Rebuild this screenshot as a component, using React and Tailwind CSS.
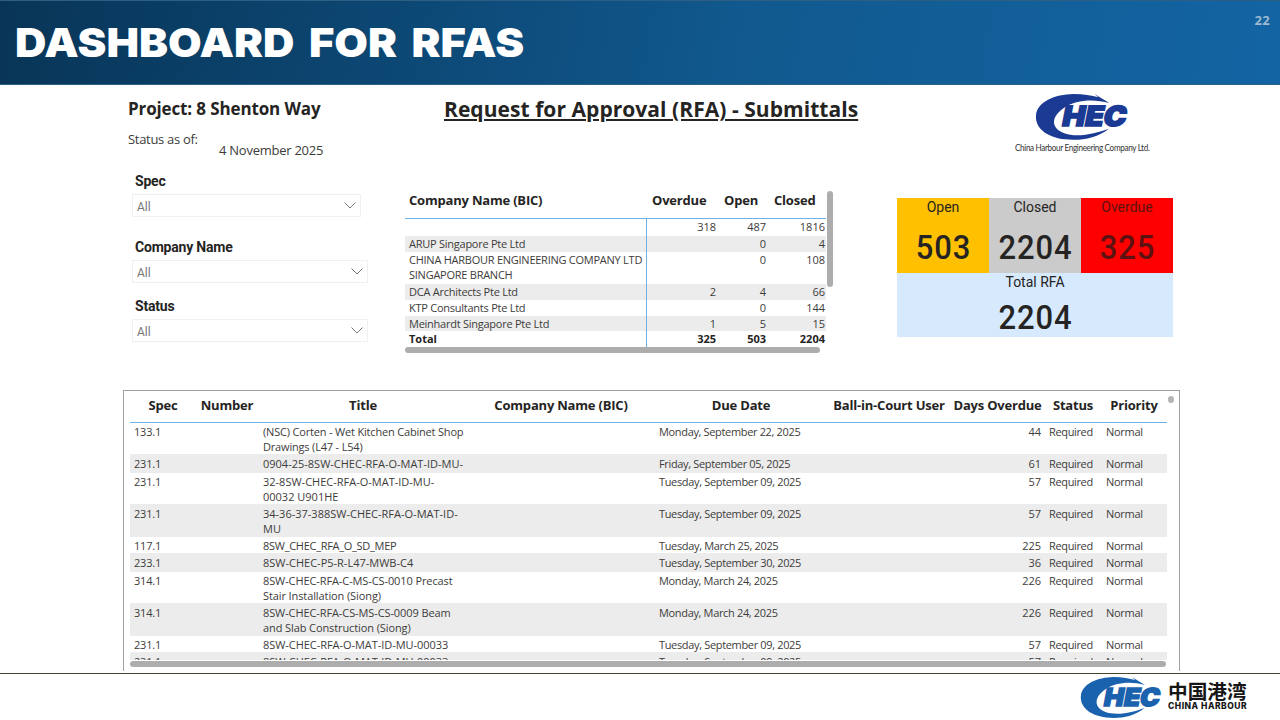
import React from 'react';

const filters = [
  { label: 'Spec', box: 'ml-1 w-[229px]', gap: 'h-[66px]' },
  { label: 'Company Name', box: 'ml-1 w-[236px]', gap: 'h-[59px]' },
  { label: 'Status', box: 'ml-1 w-[236px]', gap: 'h-[59px]' },
];

const companies = [
  { name: [''], overdue: '318', open: '487', closed: '1816', height: 'h-[17px]' },
  { name: ['ARUP Singapore Pte Ltd'], overdue: '', open: '0', closed: '4', height: 'h-[16px]' },
  { name: ['CHINA HARBOUR ENGINEERING COMPANY LTD', 'SINGAPORE BRANCH'], overdue: '', open: '0', closed: '108', height: 'h-[32px]' },
  { name: ['DCA Architects Pte Ltd'], overdue: '2', open: '4', closed: '66', height: 'h-[16px]' },
  { name: ['KTP Consultants Pte Ltd'], overdue: '', open: '0', closed: '144', height: 'h-[16px]' },
  { name: ['Meinhardt Singapore Pte Ltd'], overdue: '1', open: '5', closed: '15', height: 'h-[15px]' },
];

const submittals = [
  { spec: '133.1', title: ['(NSC) Corten - Wet Kitchen Cabinet Shop', 'Drawings (L47 - L54)'], due: 'Monday, September 22, 2025', days: 44, height: 'h-[31px]', tracking: 'tracking-[-0.18px]' },
  { spec: '231.1', title: ['0904-25-8SW-CHEC-RFA-O-MAT-ID-MU-'], due: 'Friday, September 05, 2025', days: 61, height: 'h-[19px]', tracking: 'tracking-[0px]' },
  { spec: '231.1', title: ['32-8SW-CHEC-RFA-O-MAT-ID-MU-', '00032 U901HE'], due: 'Tuesday, September 09, 2025', days: 57, height: 'h-[31px]', tracking: 'tracking-[0px]' },
  { spec: '231.1', title: ['34-36-37-388SW-CHEC-RFA-O-MAT-ID-', 'MU'], due: 'Tuesday, September 09, 2025', days: 57, height: 'h-[33px]', tracking: 'tracking-[0px]' },
  { spec: '117.1', title: ['8SW_CHEC_RFA_O_SD_MEP'], due: 'Tuesday, March 25, 2025', days: 225, height: 'h-[16px]', tracking: 'tracking-[-0.28px]' },
  { spec: '233.1', title: ['8SW-CHEC-P5-R-L47-MWB-C4'], due: 'Tuesday, September 30, 2025', days: 36, height: 'h-[19px]', tracking: 'tracking-[0px]' },
  { spec: '314.1', title: ['8SW-CHEC-RFA-C-MS-CS-0010 Precast', 'Stair Installation (Siong)'], due: 'Monday, March 24, 2025', days: 226, height: 'h-[31px]', tracking: 'tracking-[-0.1px]' },
  { spec: '314.1', title: ['8SW-CHEC-RFA-CS-MS-CS-0009 Beam', 'and Slab Construction (Siong)'], due: 'Monday, March 24, 2025', days: 226, height: 'h-[33px]', tracking: 'tracking-[-0.1px]' },
  { spec: '231.1', title: ['8SW-CHEC-RFA-O-MAT-ID-MU-00033'], due: 'Tuesday, September 09, 2025', days: 57, height: 'h-[16px]', tracking: 'tracking-[-0.05px]' },
  { spec: '231.1', title: ['8SW-CHEC-RFA-O-MAT-ID-MU-00033'], due: 'Tuesday, September 09, 2025', days: 57, height: 'h-[8px] overflow-hidden', tracking: 'tracking-[-0.05px]' },
];

const columns = ['Spec', 'Number', 'Title', 'Company Name (BIC)', 'Due Date', 'Ball-in-Court User', 'Days Overdue', 'Status', 'Priority'];

const kpis = [
  { label: 'Open', value: '503', color: 'bg-[#ffc000]', text: 'text-[#252423]' },
  { label: 'Closed', value: '2204', color: 'bg-[#cbcbcb]', text: 'text-[#252423]' },
  { label: 'Overdue', value: '325', color: 'bg-[#ff0000]', text: 'text-[#5c1212]' },
];

const ChecLogo = ({ className }) => (
  <svg viewBox="165 24 284 144" preserveAspectRatio="none" className={className} fill="currentColor">
    <path d="M343 27L387 54C340 41 288 44 252 68C207 98 212 138 270 149C310 155 350 143 386 131C350 160 300 168 255 163C195 156 165 125 168 92C170 50 225 28 280 27C310 27 335 32 354 37Z" />
    <g transform="translate(243 124) skewX(-11)">
      <text x="0" y="0" fontFamily="Inter" fontWeight="900" fontSize="83" textLength="191" lengthAdjust="spacingAndGlyphs" stroke="currentColor" strokeWidth="5">HEC</text>
    </g>
  </svg>
);

const Filter = ({ label, box, gap }) => (
  <div className={gap}>
    <div className="ml-[7px] h-[22px] pt-px font-[Roboto] text-[14px] leading-[17px] font-bold tracking-[-0.2px] text-[#252423]">{label}</div>
    <div className={`${box} flex h-[23px] items-center justify-between border border-[#f0f0f0] pr-1 pl-1`}>
      <span className="pt-[3px] font-[Roboto] text-[12px] leading-none text-[#777]">All</span>
      <svg width="12" height="7" viewBox="0 0 12 7" fill="none" stroke="#777" strokeWidth="1">
        <path d="M0.5 0.5L6 6L11.5 0.5" />
      </svg>
    </div>
  </div>
);

const CompanyTable = () => (
  <div className="relative w-[428px]">
    <div className="grid h-[35px] w-[421px] grid-cols-[243px_66px_56px_56px] border-b border-[#6fb1e4] pt-[6px] text-[13px] leading-[20px] font-bold tracking-[-0.2px] whitespace-nowrap text-[#252423]">
      <span className="pl-1">Company Name (BIC)</span>
      <span className="pl-1">Overdue</span>
      <span className="pl-[10px]">Open</span>
      <span className="pl-1">Closed</span>
    </div>
    {companies.map((c, i) => (
      <div
        key={i}
        className={`${c.height} ${i % 2 ? 'bg-[#ececec]' : ''} grid w-[421px] grid-cols-[241px_1px_69px_50px_60px] text-[11px] leading-[15px] text-[#3d3c3b]`}
      >
        <span className="pl-1 tracking-[-0.25px] whitespace-nowrap">
          {c.name.map((line) => (
            <span key={line} className="block">{line}</span>
          ))}
        </span>
        <span className="bg-[#6fb1e4]" />
        <span className="text-right">{c.overdue}</span>
        <span className="text-right">{c.open}</span>
        <span className="pr-[1px] text-right">{c.closed}</span>
      </div>
    ))}
    <div className="grid h-[16px] w-[421px] grid-cols-[241px_1px_69px_50px_60px] text-[11px] leading-[16px] font-bold text-[#252423]">
      <span className="pl-1">Total</span>
      <span className="bg-[#6fb1e4]" />
      <span className="text-right">325</span>
      <span className="text-right">503</span>
      <span className="pr-[1px] text-right">2204</span>
    </div>
    <div className="h-[6px] w-[415px] rounded-full bg-[#adadad]" />
    <div className="absolute top-[7px] right-0 h-[96px] w-[6px] rounded-full bg-[#adadad]" />
  </div>
);

const SubmittalTable = () => (
  <div className="relative ml-[123px] h-[281px] w-[1057px] border border-b-0 border-[#a0a0a0] pt-px pl-[6px]">
    <div className="grid h-[31px] w-[1037px] grid-cols-[66px_62px_210px_186px_174px_122px_95px_56px_66px] border-b border-[#6fb1e4] pt-[3px] text-center text-[13px] leading-[20px] font-bold tracking-[-0.2px] whitespace-nowrap text-[#252423]">
      {columns.map((name) => (
        <span key={name}>{name}</span>
      ))}
    </div>
    {submittals.map((row, i) => (
      <div
        key={i}
        className={`${row.height} ${i % 2 ? 'bg-[#ececec] pt-[2px]' : 'pt-[1px]'} grid w-[1037px] grid-cols-[66px_62px_210px_186px_174px_122px_95px_56px_66px] text-[11px] leading-[15px] whitespace-nowrap text-[#3d3c3b]`}
      >
        <span className="pl-1 tracking-[-0.2px]">{row.spec}</span>
        <span />
        <span className={`pl-[5px] ${row.tracking}`}>
          {row.title.map((line) => (
            <span key={line} className="block">{line}</span>
          ))}
        </span>
        <span />
        <span className="pl-[5px] tracking-[-0.34px]">{row.due}</span>
        <span />
        <span className="pr-1 text-right">{row.days}</span>
        <span className="pl-1 tracking-[-0.35px]">Required</span>
        <span className="pl-[5px] tracking-[-0.3px]">Normal</span>
      </div>
    ))}
    <div className="mt-px h-[6px] w-[1036px] rounded-full bg-[#adadad]" />
    <div className="absolute top-[5px] right-[5px] h-[7px] w-[6px] rounded-full bg-[#b5b5b5]" />
  </div>
);

const App = () => {
  return (
    <div className="flex h-[720px] w-[1280px] flex-col overflow-hidden bg-white font-['Open_Sans',sans-serif]">
      <header className="flex h-[85px] shrink-0 justify-between border-y border-[#2c5f83] bg-linear-[100deg,#083557,#0d4a78_35%,#115a90_60%,#1364a3] pr-[10px] pl-[15px]">
        <h1 className="origin-left scale-x-[1.085] pt-[18px] font-[Inter] text-[40px] leading-[48px] font-black [word-spacing:5.5px] whitespace-nowrap text-white">
          DASHBOARD FOR RFAS
        </h1>
        <span className="pt-[11px] text-[13px] leading-[16px] font-bold tracking-[0.3px] text-[#9db9d0]">22</span>
      </header>

      <div className="flex h-[305px] shrink-0">
        <div className="ml-[128px] w-[277px]">
          <h2 className="h-[46px] pt-[12px] text-[17px] leading-[24px] font-bold tracking-[-0.13px] text-[#252423]">Project: 8 Shenton Way</h2>
          <div className="flex h-[41px] text-[13px] leading-[16px] text-[#3d3c3b]">
            <span className="w-[91px] tracking-[-0.3px]">Status as of:</span>
            <span className="pt-[11px] tracking-[-0.25px]">4 November 2025</span>
          </div>
          {filters.map((f) => (
            <Filter key={f.label} {...f} />
          ))}
        </div>

        <div className="w-[492px]">
          <h2 className="h-[99px] pt-[10px] pl-[39px] text-[21px] leading-[28px] font-bold tracking-[0.05px] whitespace-nowrap text-[#252423] underline decoration-2 underline-offset-2">
            Request for Approval (RFA) - Submittals
          </h2>
          <CompanyTable />
        </div>

        <div className="w-[277px] text-[#252423]">
          <div className="ml-[118px] flex h-[113px] w-[134px] flex-col pt-2">
            <ChecLogo className="ml-5 h-[48px] w-[95px] text-[#1b3a94]" />
            <p className="origin-left scale-x-[0.9] pt-px font-[Lato] text-[9px] leading-[12px] tracking-[-0.36px] whitespace-nowrap text-[#333]">China Harbour Engineering Company Ltd.</p>
          </div>
          <div className="grid h-[75px] w-[276px] grid-cols-3 text-center font-[Roboto]">
            {kpis.map((k) => (
              <div key={k.label} className={`${k.color} ${k.text}`}>
                <div className="text-[14px] leading-[18px]">{k.label}</div>
                <div className="scale-x-[0.91] pt-[11px] pl-px text-[34px] leading-[40px] font-medium tracking-[1px]">{k.value}</div>
              </div>
            ))}
          </div>
          <div className="h-[64px] w-[276px] bg-[#d7e9fd] text-center font-[Roboto]">
            <div className="text-[14px] leading-[18px]">Total RFA</div>
            <div className="scale-x-[0.91] pt-[6px] pl-px text-[34px] leading-[40px] font-medium tracking-[1px]">2204</div>
          </div>
        </div>
      </div>

      <SubmittalTable />

      <footer className="mt-[2px] flex h-[47px] shrink-0 border-t border-[#45442f] pt-[2px]">
        <ChecLogo className="ml-[1080px] h-[43px] w-[83px] text-[#1b62ae]" />
        <div className="ml-[5px] pt-[5px] text-[#161616]">
          <div className="font-['Noto_Sans_CJK_SC',sans-serif] text-[19.7px] leading-[20px] font-bold whitespace-nowrap">中国港湾</div>
          <div className="font-[Inter] text-[8.5px] leading-[11px] font-extrabold tracking-[0.5px] whitespace-nowrap">CHINA HARBOUR</div>
        </div>
      </footer>
    </div>
  );
};

export default App;
